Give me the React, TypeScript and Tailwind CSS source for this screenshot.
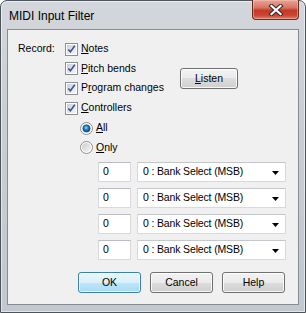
import React from "react";

function Check() {
  return (
    <svg width="13" height="13" viewBox="0 0 13 13" className="shrink-0">
      <defs>
        <linearGradient id="cbg" x1="0" y1="0" x2="1" y2="1">
          <stop offset="0" stopColor="#cbcfd5" />
          <stop offset="1" stopColor="#f6f6f6" />
        </linearGradient>
      </defs>
      <rect x="0.5" y="0.5" width="12" height="12" fill="#ffffff" stroke="#8e8f8f" />
      <rect x="2" y="2" width="9" height="9" fill="url(#cbg)" />
      <path d="M3.3 6.4 L5.4 8.8 L9.8 2.8" fill="none" stroke="#34539a" strokeWidth="1.5" />
    </svg>
  );
}

function Radio({ on }: { on?: boolean }) {
  return (
    <svg width="13" height="13" viewBox="0 0 13 13" className="shrink-0">
      <defs>
        <linearGradient id="rbg" x1="0" y1="0" x2="1" y2="1">
          <stop offset="0" stopColor="#c9ccd0" />
          <stop offset="1" stopColor="#f7f7f7" />
        </linearGradient>
        <radialGradient id="rdot" cx="0.45" cy="0.4" r="0.6">
          <stop offset="0" stopColor="#8fe0ff" />
          <stop offset="0.45" stopColor="#1c88cf" />
          <stop offset="1" stopColor="#0d3f78" />
        </radialGradient>
      </defs>
      <circle cx="6.5" cy="6.5" r="6" fill="#ffffff" stroke="#8e8f8f" />
      <circle cx="6.5" cy="6.5" r="4.5" fill="url(#rbg)" />
      {on && <circle cx="6.5" cy="6.5" r="3.6" fill="url(#rdot)" stroke="#1b3d6a" strokeWidth="0.6" />}
    </svg>
  );
}

function U({ pre, u, post }: { pre?: string; u: string; post?: string }) {
  return (
    <span className="whitespace-nowrap">
      {pre}
      <span className="underline underline-offset-[1px]">{u}</span>
      {post}
    </span>
  );
}

function CheckRow({ h, children }: { h: string; children: React.ReactNode }) {
  return (
    <div className={`flex items-center gap-[3px] ${h}`}>
      <Check />
      {children}
    </div>
  );
}

function Btn({ children, def }: { children: React.ReactNode; def?: boolean }) {
  return (
    <div
      className={
        def
          ? "w-[63px] h-[21px] rounded-[3px] border border-[#3c7fb1] bg-[linear-gradient(to_bottom,#eaf6fd_0%,#d9f0fc_50%,#bee6fd_50%,#a7d9f5_100%)] shadow-[inset_0_0_0_1px_rgba(255,255,255,0.7)] flex items-center justify-center"
          : "w-[63px] h-[21px] rounded-[3px] border border-[#707070] bg-[linear-gradient(to_bottom,#f2f2f2_0%,#ebebeb_50%,#dddddd_50%,#cfcfcf_100%)] shadow-[inset_0_0_0_1px_rgba(255,255,255,0.8)] flex items-center justify-center"
      }
    >
      {children}
    </div>
  );
}

function ComboRow() {
  return (
    <div className="flex h-[20px] gap-[4px]">
      <div className="w-[33px] h-[20px] bg-white border border-[#d6d9dd] border-t-[#b9bdc3] flex items-center pl-[4px]">0</div>
      <div className="ml-[2px] w-[149px] h-[20px] bg-white border border-[#d6d9dd] border-t-[#c4c8cd] flex items-center pl-[5px] pr-[6px]">
        <span className="flex-1 whitespace-nowrap tracking-[-0.15px]">0 : Bank Select (MSB)</span>
        <svg width="7" height="4" viewBox="0 0 7 4" className="mt-[1px]">
          <path d="M0 0 H7 L3.5 4 Z" fill="#000" />
        </svg>
      </div>
    </div>
  );
}

export default function App() {
  return (
    <div className="w-[306px] h-[313px] font-['Liberation_Sans',Arial,sans-serif] text-[10.5px] text-black">
      <div className="w-[306px] h-[313px] flex flex-col rounded-t-[7px] border border-[#4d545c] bg-[linear-gradient(to_bottom,#d3d7dc_0%,#c9ced4_40%,#c2c8cf_100%)] shadow-[inset_0_0_0_1px_rgba(255,255,255,0.55)]">
        <div className="h-[28px] flex shrink-0">
          <div className="flex-1 flex items-center pl-[8px] text-[12px] text-black pt-[1px]">MIDI Input Filter</div>
          <div className="mr-[6px] -mt-px w-[47px] h-[20px] rounded-b-[4px] border border-t-0 border-[#6a2b22] bg-[linear-gradient(to_bottom,#e6a597_0%,#d87565_40%,#c43a25_55%,#c9452f_80%,#df7f69_100%)] shadow-[inset_0_0_0_1px_rgba(255,200,190,0.45)] flex items-center justify-center">
            <svg width="16" height="12" viewBox="0 0 16 12">
              <path d="M3.5 2 L12.5 10 M12.5 2 L3.5 10" stroke="#3a2a28" strokeWidth="4.2" strokeLinecap="square" />
              <path d="M3.5 2 L12.5 10 M12.5 2 L3.5 10" stroke="#ffffff" strokeWidth="2.2" strokeLinecap="square" />
            </svg>
          </div>
        </div>
        <div className="mx-[6px] mb-[7px] flex-1 border border-[#868c93] bg-[#f0f0f0] flex flex-col pt-[9px]">
          <div className="flex pl-[10px]">
            <div className="w-[47px] h-[20px] flex items-center">Record:</div>
            <div className="w-[115px] flex flex-col">
              <CheckRow h="h-[20px]"><U u="N" post="otes" /></CheckRow>
              <CheckRow h="h-[19px]"><U u="P" post="itch bends" /></CheckRow>
              <CheckRow h="h-[20px]"><U pre="P" u="r" post="ogram changes" /></CheckRow>
              <CheckRow h="h-[20px]"><U u="C" post="ontrollers" /></CheckRow>
              <div className="h-[20px] pl-[15px] flex items-center gap-[3px]">
                <Radio on />
                <U u="A" post="ll" />
              </div>
              <div className="h-[19px] pl-[15px] flex items-center gap-[3px]">
                <Radio />
                <U u="O" post="nly" />
              </div>
            </div>
            <div className="pt-[29px]">
              <div className="w-[58px] h-[21px] rounded-[3px] border border-[#707070] bg-[linear-gradient(to_bottom,#f2f2f2_0%,#ebebeb_50%,#dddddd_50%,#cfcfcf_100%)] shadow-[inset_0_0_0_1px_rgba(255,255,255,0.8)] flex items-center justify-center">
                <U u="L" post="isten" />
              </div>
            </div>
          </div>
          <div className="flex flex-col gap-[6px] pl-[90px] mt-[5px]">
            <ComboRow />
            <ComboRow />
            <ComboRow />
            <ComboRow />
          </div>
          <div className="flex justify-end gap-[9px] pr-[13px] mt-[12px]">
            <Btn def>OK</Btn>
            <Btn>Cancel</Btn>
            <Btn>Help</Btn>
          </div>
        </div>
      </div>
    </div>
  );
}
